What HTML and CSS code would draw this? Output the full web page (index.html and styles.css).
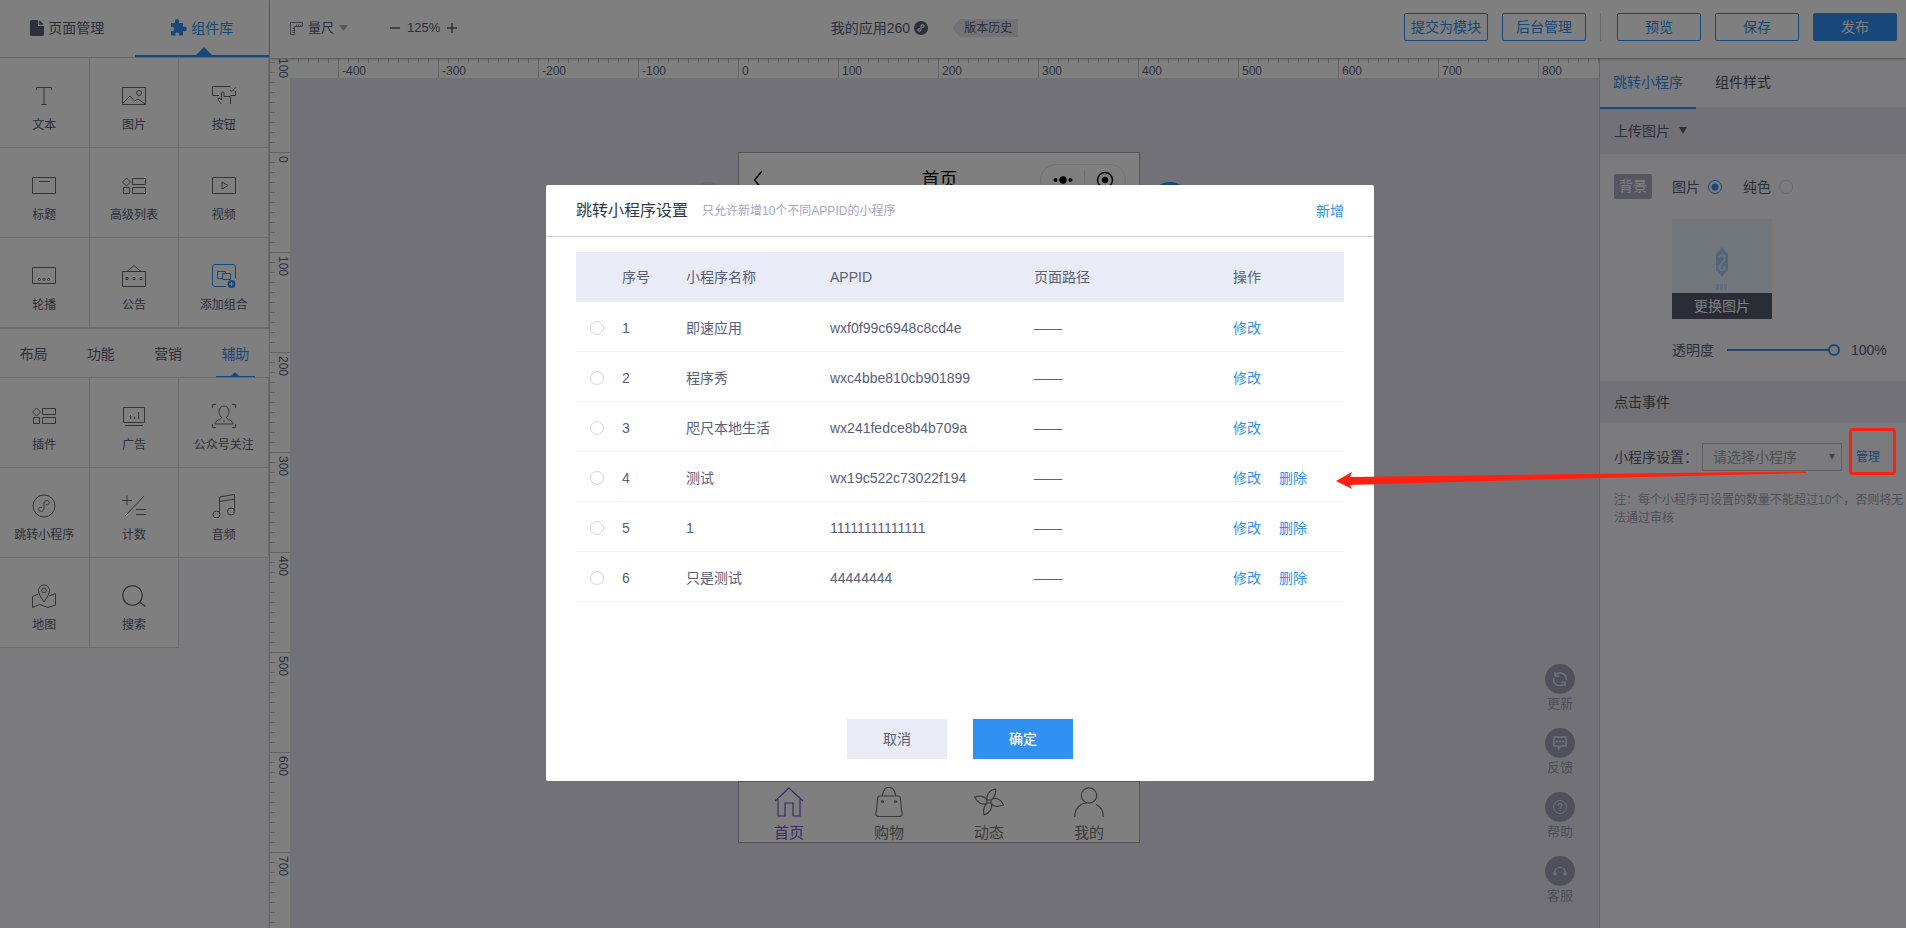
FILE: index.html
```html
<!DOCTYPE html>
<html lang="zh-CN">
<head>
<meta charset="utf-8">
<title>我的应用260</title>
<link rel="stylesheet" href="styles.css">
</head>
<body>
<div class="app">
  <aside class="sidebar">
    <nav class="main-tabs">
      <button class="main-tab" type="button">
        <svg width="14" height="16" viewBox="0 0 14 16"><path fill="currentColor" d="M1.500 0H8v6h6v8.500a1.500 1.500 0 0 1-1.500 1.500h-11A1.500 1.500 0 0 1 0 14.500v-13A1.500 1.500 0 0 1 1.500 0zM9.200 0 14 4.800H9.200z"/></svg>
        页面管理</button>
      <button class="main-tab active" type="button">
        <svg width="17" height="17" viewBox="0 0 17 17"><path fill="currentColor" d="M1 4h4.200C4.300 2 4.900.300 7 .300S9.700 2 8.800 4H13v4c1.800-.9 3.700-.2 3.700 1.900S14.800 12.900 13 12v4.500H8.800c.7-1.900.1-3-1.600-3s-2.300 1.100-1.600 3H1v-4.700c2 .6 3.200-.1 3.200-1.800S3 7.600 1 8.300z"/></svg>
        组件库</button>
    </nav>
    <div class="tiles">
      <button class="tile" type="button"><svg class="ico" viewBox="0 0 24 24"><path d="M4.500 6V3.500h15V6M12 3.500v17M9.500 20.500h5"/></svg>文本</button>
      <button class="tile" type="button"><svg class="ico" viewBox="0 0 24 24"><path d="M.500 3.500h23v17H.500zM1 19l7-7 4.500 5 3.500-2 7 5"/><circle cx="17" cy="9" r="2.500"/></svg>图片</button>
      <button class="tile" type="button"><svg class="ico" viewBox="0 0 24 24"><path d="M7 11.500H.500v-9h18M23.500 7v4.500h-5M18 6l2 1.500L23.500 3.500M9 20c0-1.500-3-3-3-5.500 1.500-.7 2.500 0 3.500 1.500V9c0-1.500 2.500-1.500 2.500 0v3.500h6.500v7.500"/></svg>按钮</button>
      <button class="tile" type="button"><svg class="ico" viewBox="0 0 24 24"><path d="M.500 3.500h23v16H.500zM7 7.500h11"/></svg>标题</button>
      <button class="tile" type="button"><svg class="ico" viewBox="0 0 24 24"><path d="m4.500 4 4 4-4 4-4-4zM10.500 4.500h13v6h-13zM1.500 13.500h6v6h-6zM10.500 13.500h13v6h-13z"/></svg>高级列表</button>
      <button class="tile" type="button"><svg class="ico" viewBox="0 0 24 24"><path d="M.500 3.500h23v16H.500zM10 8l6 3.500-6 3.500z"/></svg>视频</button>
      <button class="tile" type="button"><svg class="ico" viewBox="0 0 24 24"><path d="M.500 3.500h23v16H.500z"/><circle cx="7.500" cy="15.500" r="1"/><circle cx="12" cy="15.500" r="1"/><circle cx="16.500" cy="15.500" r="1"/></svg>轮播</button>
      <button class="tile" type="button"><svg class="ico" viewBox="0 0 24 24"><path d="M.500 7.500h23v15H.500zM5 7.500l7-6 7 6"/><path d="M4 13.500h2v2H4zM11 13.500h2v2h-2zM18 13.500h2v2h-2z"/></svg>公告</button>
      <button class="tile" type="button"><svg class="ico blue" viewBox="0 0 24 24"><path d="M14 22.500H3a2.500 2.500 0 0 1-2.500-2.500V3A2.500 2.500 0 0 1 3 .500h18A2.500 2.500 0 0 1 23.500 3v11.500M10 14.500H5.500v-7h8v2M10.500 9.500h8v6h-8z"/><circle cx="19.500" cy="20" r="4" fill="currentColor" stroke="none"/><path stroke="#fff" d="M17.500 20h4M19.500 18v4"/></svg>添加组合</button>
    </div>
    <nav class="sub-tabs">
      <button type="button">布局</button>
      <button type="button">功能</button>
      <button type="button">营销</button>
      <button type="button" class="active">辅助</button>
    </nav>
    <div class="tiles">
      <button class="tile" type="button"><svg class="ico" viewBox="0 0 24 24"><path d="m4.500 4 4 4-4 4-4-4zM10.500 4.500h13v6h-13zM1.500 13.500h6v6h-6zM10.500 13.500h13v6h-13z"/></svg>插件</button>
      <button class="tile" type="button"><svg class="ico" viewBox="0 0 24 24"><path d="M1.500 3.500h21v15h-21zM3 21.500h18M8.500 11v4M12.500 12.500V15M16.500 8v7"/></svg>广告</button>
      <button class="tile" type="button"><svg class="ico" viewBox="0 0 24 24"><path d="M.500 4V.500H4M20 .500h3.500V4M.500 20v3.500H4M20 23.500h3.500V20M9.500 13.500C7 11 6.500 8 7.500 5c1.500-4 7.500-4 9 0 1 3 .5 6-2 8.500.2 2.500 6.500 2 6.500 6.500H3c0-4.500 6.300-4 6.500-6.500z"/><circle cx="12" cy="17" r=".5"/></svg>公众号关注</button>
      <button class="tile" type="button"><svg class="ico" viewBox="0 0 24 24"><circle cx="12" cy="12" r="11"/><path d="M10 13.500c-2-.8-3.500.5-3.300 2.200.6 2.300 5 2.200 5.300-.7V9c.3-2.900 4.700-3 5.300-.7.2 1.700-1.300 3-3.300 2.200"/></svg>跳转小程序</button>
      <button class="tile" type="button"><svg class="ico" viewBox="0 0 24 24"><path d="M0 6.500h10M5 1.500v10M3 22 22 2M14 15.500h10M14 20.500h10"/></svg>计数</button>
      <button class="tile" type="button"><svg class="ico" viewBox="0 0 24 24"><circle cx="4.500" cy="20.500" r="3.500"/><circle cx="19" cy="17.500" r="3.500"/><path d="M7.500 20V3l15-2.500v17M7.500 7.500l15-2.500"/></svg>音频</button>
      <button class="tile" type="button"><svg class="ico" viewBox="0 0 24 24"><path d="M12 18C9 13.500 6.500 9.500 6.500 6.500a5.500 5.500 0 0 1 11 0C17.500 9.500 15 13.500 12 18zM6.500 10l-6 2.500v11L8 20.500l8 3 7.500-2.500V9.500L17 12"/><circle cx="12" cy="6.500" r="2.300"/></svg>地图</button>
      <button class="tile" type="button"><svg class="ico thick" viewBox="0 0 24 24"><circle cx="10.500" cy="11.500" r="9.800"/><path d="m17.500 18 6 4.500"/></svg>搜索</button>
    </div>
  </aside>

  <div class="workspace">
    <header class="topbar">
      <div class="tools">
        <button class="ruler-btn" type="button">
          <svg width="13" height="13" viewBox="0 0 13 13"><path fill="none" stroke="currentColor" stroke-opacity=".75" d="M.500.500h12v4h-8v8h-4zM6.500 2.500v2M8.500 2.500v2M10.500 2.500v2M2.500 6.500h2M2.500 8.500h2M2.500 10.500h2"/></svg>
          量尺
          <svg class="pale" width="9" height="6" viewBox="0 0 9 6"><path fill="currentColor" d="M0 0h9L4.500 6z"/></svg>
        </button>
        <div class="zoomer">
          <button type="button" aria-label="缩小"><svg width="10" height="10" viewBox="0 0 10 10"><path stroke="currentColor" stroke-width="1.500" d="M0 5h10"/></svg></button>
          <span>125%</span>
          <button type="button" aria-label="放大"><svg width="10" height="10" viewBox="0 0 10 10"><path stroke="currentColor" stroke-width="1.500" d="M0 5h10M5 0v10"/></svg></button>
        </div>
      </div>
      <div class="app-title">
        <span>我的应用260</span>
        <svg width="14" height="14" viewBox="0 0 24 24"><circle cx="12" cy="12" r="12" fill="currentColor"/><path fill="none" stroke="#fff" stroke-width="2" d="M10 13.500c-2-.8-3.500.5-3.300 2.200.6 2.300 5 2.200 5.300-.7V9c.3-2.900 4.700-3 5.300-.7.2 1.700-1.300 3-3.300 2.200"/></svg>
        <button class="history" type="button">版本历史</button>
      </div>
      <div class="actions">
        <button class="btn" type="button">提交为模块</button>
        <button class="btn" type="button">后台管理</button>
        <span class="rule"></span>
        <button class="btn" type="button">预览</button>
        <button class="btn" type="button">保存</button>
        <button class="btn solid" type="button">发布</button>
      </div>
    </header>

    <div class="editor">
      <div class="ruler-v"><span>100</span><span>0</span><span>100</span><span>200</span><span>300</span><span>400</span><span>500</span><span>600</span><span>700</span></div>
      <div class="ruler-h"><span>-400</span><span>-300</span><span>-200</span><span>-100</span><span>0</span><span>100</span><span>200</span><span>300</span><span>400</span><span>500</span><span>600</span><span>700</span><span>800</span></div>
      <main class="stage">
        <span class="knob left"></span>
        <span class="knob right"></span>
        <section class="phone">
          <div class="phone-bar">
            <svg width="10" height="20" viewBox="0 0 10 20"><path fill="none" stroke="#000" stroke-width="1.500" d="M9 1 1.500 10 9 19"/></svg>
            <h1>首页</h1>
            <div class="capsule">
              <svg width="20" height="8" viewBox="0 0 20 8"><circle cx="2.500" cy="4" r="2"/><circle cx="10" cy="4" r="3.700"/><circle cx="17.500" cy="4" r="2"/></svg>
              <svg width="18" height="18" viewBox="0 0 18 18"><circle cx="9" cy="9" r="7.500" fill="none" stroke="#000" stroke-width="1.500"/><circle cx="9" cy="9" r="3.200"/></svg>
            </div>
          </div>
          <nav class="phone-tabs">
            <a class="active" href="#"><svg viewBox="0 0 30 30"><path d="M1 14 15 1l14 13M4 12v17h7V16h8v13h7V12"/></svg>首页</a>
            <a href="#"><svg viewBox="0 0 30 30"><path d="M5.500 9h19c1 0 1.500.5 1.700 1.500L28 27c0 1.500-1 2.500-2.500 2.500h-21C3 29.500 2 28.500 2 27l1.800-16.500C4 9.500 4.500 9 5.500 9zM8.500 8.500c.5-11 12.500-11 13 0"/><circle cx="8.500" cy="14.500" r="1"/><circle cx="21.500" cy="14.500" r="1"/></svg>购物</a>
            <a href="#"><svg viewBox="0 0 30 30"><path d="M13 13C12 7 16 3 21.500 2c.5 4-.5 8-4.500 11M17 13c4-3 9-2 12.500 5-5 2-10 2-12.500-2M17 16c2 5-1 10-7 12-1-5 0-9 3-12M13 16c-5 3-10-1-12.500-6 5-1.500 10-1 12.500 3M13 13h4v3h-4z"/></svg>动态</a>
            <a href="#"><svg viewBox="0 0 30 30"><circle cx="15" cy="8.500" r="7.700"/><path d="M.700 30C.700 22 6 16 13 16M22 17.500c4.500 2 7.300 6.500 7.300 12.500"/></svg>我的</a>
          </nav>
        </section>
        <div class="helpers">
          <button type="button"><i><svg viewBox="0 0 14 14"><path fill="none" stroke="currentColor" stroke-width="1.500" d="M3 2.500A6 6 0 0 1 13 8M11 12A6 6 0 0 1 1 6M2 0v4h4M12 14v-4H8"/></svg></i>更新</button>
          <button type="button"><i><svg viewBox="0 0 14 14"><path fill="none" stroke="currentColor" stroke-width="1.500" d="M1 1h12v9H8l-2.500 3V10H1zM3 5.500h2M6 5.500h2M9 5.500h2"/></svg></i>反馈</button>
          <button type="button"><i><svg viewBox="0 0 14 14"><path fill="none" stroke="currentColor" stroke-width="1.200" d="M5 5.500C5 2.500 9.300 3 9 5.500 8.800 7 7 7 7 9M7 10v1.300"/><circle cx="7" cy="7" r="6.400" fill="none" stroke="currentColor"/></svg></i>帮助</button>
          <button type="button"><i><svg viewBox="0 0 14 14"><path fill="none" stroke="currentColor" stroke-width="1.200" d="M1.500 9.500c0-8 11-8 11 0"/><circle cx="2" cy="10" r="1.800" fill="currentColor"/><circle cx="12" cy="10" r="1.800" fill="currentColor"/></svg></i>客服</button>
        </div>
      </main>

      <aside class="props">
        <nav class="prop-tabs">
          <button class="active" type="button">跳转小程序</button>
          <button type="button">组件样式</button>
        </nav>
        <h2 class="prop-head">上传图片 <svg width="8" height="7" viewBox="0 0 8 7"><path fill="currentColor" d="M0 0h8L4 7z"/></svg></h2>
        <div class="prop-body">
          <div class="bg-row">
            <span class="badge">背景</span>
            <label>图片 <input type="radio" name="bg" checked></label>
            <label>纯色 <input type="radio" name="bg"></label>
          </div>
          <div class="thumb">
            <svg width="12" height="44" viewBox="0 0 12 44"><path fill="#a5cdf4" d="m6 0 3 4 3 3v16l-3 3-3 4-3-4-3-3V7l3-3z"/><path fill="none" stroke="#dcedf8" stroke-width="1.500" d="M3.500 10 6 7.500 8.500 9v4l-5 6v3L6 23.500 8.500 22v-3"/><path stroke="#c3dcee" stroke-width="6" stroke-dasharray="3 1" d="M0 40h12"/></svg>
            <button type="button">更换图片</button>
          </div>
          <label class="opacity">透明度 <input type="range" min="0" max="100" value="100"><output>100%</output></label>
        </div>
        <h2 class="prop-head small">点击事件</h2>
        <div class="event-row">
          <label for="mini">小程序设置：</label>
          <span class="select"><select id="mini"><option>请选择小程序</option></select><svg width="6" height="6" viewBox="0 0 6 6"><path fill="currentColor" d="M0 0h6L3 6z"/></svg></span>
          <a href="#">管理</a>
        </div>
        <p class="note">注：每个小程序可设置的数量不能超过10个，否则将无法通过审核</p>
      </aside>
    </div>
  </div>
</div>

<div class="mask">
  <form class="dialog" role="dialog" aria-labelledby="dlg-title">
    <header class="dlg-head">
      <h2 id="dlg-title">跳转小程序设置</h2>
      <small>只允许新增10个不同APPID的小程序</small>
      <a href="#">新增</a>
    </header>
    <table class="list">
      <colgroup><col class="c-pick"><col class="c-no"><col class="c-name"><col class="c-id"><col class="c-path"><col></colgroup>
      <thead><tr><th></th><th>序号</th><th>小程序名称</th><th>APPID</th><th>页面路径</th><th>操作</th></tr></thead>
      <tbody>
        <tr><td><input type="radio" name="mini" aria-label="即速应用"></td><td>1</td><td>即速应用</td><td>wxf0f99c6948c8cd4e</td><td>——</td><td><a href="#">修改</a></td></tr>
        <tr><td><input type="radio" name="mini" aria-label="程序秀"></td><td>2</td><td>程序秀</td><td>wxc4bbe810cb901899</td><td>——</td><td><a href="#">修改</a></td></tr>
        <tr><td><input type="radio" name="mini" aria-label="咫尺本地生活"></td><td>3</td><td>咫尺本地生活</td><td>wx241fedce8b4b709a</td><td>——</td><td><a href="#">修改</a></td></tr>
        <tr><td><input type="radio" name="mini" aria-label="测试"></td><td>4</td><td>测试</td><td>wx19c522c73022f194</td><td>——</td><td><a href="#">修改</a><a href="#">删除</a></td></tr>
        <tr><td><input type="radio" name="mini" aria-label="1"></td><td>5</td><td>1</td><td>11111111111111</td><td>——</td><td><a href="#">修改</a><a href="#">删除</a></td></tr>
        <tr><td><input type="radio" name="mini" aria-label="只是测试"></td><td>6</td><td>只是测试</td><td>44444444</td><td>——</td><td><a href="#">修改</a><a href="#">删除</a></td></tr>
      </tbody>
    </table>
    <footer class="dlg-foot">
      <button type="button">取消</button>
      <button type="button" class="ok">确定</button>
    </footer>
  </form>
</div>

<span class="mark-box"></span>
<svg class="mark-arrow" width="470" height="19" viewBox="0 0 470 19"><path fill="#ff2010" d="M0 10 16 1l-2 5 231-3L470 .500v1.500l-225 5.500L14 14l2 4z"/></svg>
</body>
</html>
```

FILE: styles.css
```css
:root {
  --blue: #3091f2;
  --ink: #59607a;
  --line: #d5d5da;
  --canvas: #e4e3ee;
  --panel: #f7f7fa;
}

* { box-sizing: border-box; }

body {
  margin: 0;
  color: var(--ink);
  font: 14px/20px "Liberation Sans", "Noto Sans CJK SC", sans-serif;
}

h1, h2, p { margin: 0; font-weight: 400; }

a { color: var(--blue); text-decoration: none; }

button {
  padding: 0;
  border: 0;
  background: none;
  color: inherit;
  font: inherit;
}

input[type="radio"] {
  appearance: none;
  width: 14px;
  height: 14px;
  margin: 0;
  border: 1px solid #d5d5d9;
  border-radius: 50%;
}

.props input[type="radio"]:checked {
  border-color: var(--blue);
  background: radial-gradient(circle, var(--blue) 3px, transparent 4px);
}

.app { display: flex; height: 100vh; overflow: hidden; }

/* component library */
.sidebar {
  flex: none;
  width: 270px;
  border-right: 1px solid #c4c4c8;
  background: var(--panel);
}

.main-tabs {
  display: grid;
  grid-template-columns: 1fr 1fr;
  height: 58px;
  border-bottom: 1px solid #c8c8cc;
  background: #fff;
}

.main-tab {
  position: relative;
  display: flex;
  align-items: center;
  justify-content: center;
  gap: 4px;
  padding-bottom: 2px;
}

.main-tab.active {
  padding-bottom: 0;
  border-bottom: 2px solid var(--blue);
  color: var(--blue);
}

.main-tab.active::after {
  content: "";
  position: absolute;
  bottom: 0;
  left: 50%;
  margin-left: -6px;
  border: 8px solid transparent;
  border-top-width: 0;
  border-bottom-color: var(--blue);
}

.tiles { display: grid; grid-template-columns: repeat(3, 1fr); }

.tile {
  display: flex;
  flex-direction: column;
  align-items: center;
  gap: 8px;
  height: 90px;
  padding-top: 26px;
  border: solid var(--line);
  border-width: 0 1px 1px 0;
  background: #fff;
  font-size: 12px;
  line-height: 18px;
}

.ico {
  width: 24px;
  height: 24px;
  fill: none;
  stroke: currentColor;
  color: #6a6a6a;
}

.ico.blue { color: var(--blue); }
.ico.thick { stroke-width: 1.3; }

.sub-tabs {
  display: grid;
  grid-template-columns: repeat(4, 1fr);
  height: 50px;
  border: solid var(--line);
  border-width: 1px 0;
  background: #fff;
}

.sub-tabs button { position: relative; padding-top: 2px; }
.sub-tabs .active { color: var(--blue); }

.sub-tabs .active::before {
  content: "";
  position: absolute;
  bottom: 0;
  left: 14px;
  right: 14px;
  height: 1px;
  background: var(--blue);
}

.sub-tabs .active::after {
  content: "";
  position: absolute;
  bottom: 1px;
  left: 50%;
  margin-left: -4px;
  border: 4px solid transparent;
  border-top-width: 0;
  border-bottom-color: var(--blue);
}

/* top bar */
.workspace { flex: 1; display: flex; flex-direction: column; min-width: 0; }

.topbar {
  z-index: 1;
  display: grid;
  grid-template-columns: 8fr auto 13fr;
  align-items: center;
  flex: none;
  height: 58px;
  padding: 0 9px 2px 20px;
  background: #fff;
  box-shadow: 0 1px 2px rgba(0, 0, 0, .35);
}

.tools, .ruler-btn, .zoomer, .app-title, .actions { display: flex; align-items: center; }
.tools { gap: 42px; font-size: 13px; }
.ruler-btn { gap: 5px; }
.pale { color: #b4b4b8; }
.zoomer { gap: 7px; }
.zoomer button { display: flex; }
.app-title { gap: 4px; }

.history {
  height: 18px;
  margin-left: 20px;
  padding: 0 6px 0 12px;
  background: #e5e6ef;
  clip-path: polygon(0 50%, 8px 0, 100% 0, 100% 100%, 8px 100%);
  font-size: 12px;
  line-height: 18px;
}

.actions { justify-content: flex-end; gap: 14px; padding-bottom: 2px; }
.rule { width: 1px; height: 28px; margin-right: 2px; background: var(--line); }

.btn {
  width: 84px;
  height: 28px;
  border: 1px solid var(--blue);
  border-radius: 2px;
  color: var(--blue);
}

.btn.solid { background: var(--blue); color: #fff; }

/* canvas and rulers */
.editor {
  flex: 1;
  display: grid;
  grid-template: 20px 1fr / 20px 1fr 307px;
  min-height: 0;
}

.ruler-v, .ruler-h { display: flex; overflow: hidden; font-size: 12px; }
.ruler-v span, .ruler-h span { flex: none; }

.ruler-v {
  grid-row: 1 / 3;
  flex-direction: column;
  background:
    linear-gradient(#c8c8cc 1px, transparent 1px) 0 94px / 20px 100px repeat-y,
    linear-gradient(#c8c8cc 1px, transparent 1px) 0 4px / 5px 10px repeat-y,
    #fff;
}

.ruler-v span {
  align-self: flex-end;
  height: 100px;
  padding-top: 4px;
  line-height: 14px;
  writing-mode: vertical-rl;
}

.ruler-v span:first-child { height: 94px; padding-top: 0; }

.ruler-h {
  padding: 6px 0 0 48px;
  background:
    linear-gradient(90deg, #c8c8cc 1px, transparent 1px) 48px 0 / 100px 20px repeat-x,
    linear-gradient(90deg, #c8c8cc 1px, transparent 1px) 8px 0 / 10px 5px repeat-x,
    #fff;
  line-height: 14px;
}

.ruler-h span { width: 100px; padding-left: 4px; }

.stage { position: relative; grid-column: 2; overflow: hidden; background: var(--canvas); }

.knob {
  position: absolute;
  top: 104px;
  width: 36px;
  height: 36px;
  border-radius: 50%;
}

.knob.left { left: 400px; background: #d2d2de; }
.knob.right { left: 862px; background: var(--blue); }

.phone {
  position: absolute;
  top: 74px;
  left: 448px;
  display: flex;
  flex-direction: column;
  justify-content: space-between;
  width: 402px;
  height: 691px;
  border: 1px solid #aaa;
  background: #fff;
}

.phone-bar {
  display: grid;
  grid-template-columns: 1fr auto 1fr;
  align-items: center;
  padding: 11px 13px 0 14px;
  color: #000;
}

.phone-bar h1 { font-size: 18px; line-height: 24px; }

.capsule {
  justify-self: end;
  display: flex;
  align-items: center;
  justify-content: space-around;
  width: 86px;
  height: 32px;
  border: 1px solid #e4e4e4;
  border-radius: 16px;
  background: linear-gradient(90deg, transparent 43px, #e4e4e4 43px, #e4e4e4 44px, transparent 44px) 0 6px / 100% 20px no-repeat;
}

.phone-tabs {
  display: grid;
  grid-template-columns: repeat(4, 1fr);
  height: 61px;
  border-top: 1px solid #aaa;
}

.phone-tabs a {
  display: flex;
  flex-direction: column;
  align-items: center;
  gap: 6px;
  padding-top: 5px;
  color: #777;
  font-size: 15px;
}

.phone-tabs svg { width: 30px; height: 30px; fill: none; stroke: currentColor; stroke-width: 1.2; }
.phone-tabs .active { color: #7b4be0; }

.helpers {
  position: absolute;
  right: 24px;
  bottom: 22px;
  display: grid;
  gap: 14px;
}

.helpers button {
  display: grid;
  justify-items: center;
  color: #9a9bb0;
  font-size: 13px;
}

.helpers i {
  display: grid;
  place-items: center;
  width: 30px;
  height: 30px;
  border-radius: 50%;
  background: #9fa1b8;
  color: #e4e3ee;
}

.helpers svg { width: 14px; height: 14px; }

/* properties */
.props {
  grid-area: 1 / 3 / 3 / 4;
  border-left: 1px solid #c8c8d0;
  background: var(--panel);
}

.prop-tabs { display: flex; gap: 6px; height: 49px; color: #555; }
.prop-tabs button { height: 51px; padding: 0 13px 2px; border-bottom: 2px solid transparent; }
.prop-tabs .active { border-color: var(--blue); color: var(--blue); }

.prop-head {
  display: flex;
  align-items: center;
  gap: 9px;
  height: 47px;
  padding-left: 14px;
  background: var(--canvas);
  font-size: 14px;
}

.prop-head.small { height: 42px; color: #555; }

.prop-tabs .active { position: relative; }

.prop-body { padding: 20px 14px 0; }

.bg-row { display: flex; align-items: center; gap: 21px; }
.bg-row label { display: flex; align-items: center; gap: 8px; }

.badge {
  width: 38px;
  margin-right: -1px;
  border-radius: 2px;
  background: #abacc2;
  color: #fff;
  line-height: 25px;
  text-align: center;
}

.thumb {
  display: flex;
  flex-direction: column;
  align-items: center;
  justify-content: space-between;
  width: 100px;
  height: 100px;
  margin: 20px 0 21px 58px;
  padding-top: 28px;
  background: #e2eef6;
}

.thumb button { width: 100%; height: 26px; background: #555a6c; color: #fff; }
.thumb svg { flex: none; }

.opacity {
  display: flex;
  align-items: center;
  gap: 13px;
  height: 41px;
  padding: 0 0 21px 58px;
  white-space: nowrap;
}

.opacity output { margin-left: -2px; }

.opacity input {
  appearance: none;
  flex: none;
  width: 113px;
  height: 12px;
  margin: 0;
  background: linear-gradient(var(--blue), var(--blue)) 0 5px / 102px 2px no-repeat;
}

.opacity input::-webkit-slider-thumb {
  appearance: none;
  width: 12px;
  height: 12px;
  border: 2px solid var(--blue);
  border-radius: 50%;
  background: var(--panel);
}

.event-row { display: flex; align-items: center; padding: 20px 0 0 14px; }
.event-row label { flex: none; width: 88px; }
.event-row a { margin-left: 14px; font-size: 12px; }

.select { position: relative; width: 140px; }
.select svg { position: absolute; top: 11px; right: 7px; color: #88898f; }

.select select {
  appearance: none;
  width: 100%;
  height: 28px;
  padding: 0 10px;
  border: 1px solid #c2c2c6;
  background: none;
  color: #a0a0a6;
  font: inherit;
}

.note { padding: 20px 0 0 14px; color: #9fa1b8; font-size: 12px; line-height: 18px; }

/* dialog */
.mask {
  position: fixed;
  inset: 0;
  z-index: 10;
  display: grid;
  place-items: center;
  padding: 38px 0 0 14px;
  background: rgba(0, 0, 0, .5);
}

.dialog {
  display: flex;
  flex-direction: column;
  width: 828px;
  min-height: 596px;
  border-radius: 2px;
  background: #fff;
}

.dlg-head {
  display: flex;
  align-items: center;
  gap: 14px;
  height: 52px;
  padding: 0 30px;
  border-bottom: 1px solid #d4d4dc;
}

.dlg-head h2 { color: #333848; font-size: 16px; }
.dlg-head small { color: #a3a6bf; font-size: 12px; }
.dlg-head a { margin-left: auto; }

.list {
  table-layout: fixed;
  margin: 15px 30px 0;
  border-collapse: separate;
  border-spacing: 0;
  text-align: left;
}

.c-pick { width: 46px; }
.c-no { width: 64px; }
.c-name { width: 144px; }
.c-id { width: 204px; }
.c-path { width: 199px; }

.list th, .list td { height: 50px; padding: 0; font-weight: 400; }
.list thead { background: #e9ecf6; }
.list td { padding-top: 2px; border-bottom: 1px solid #f2f2f4; }
.list input { display: block; margin-left: 14px; }
.list a { margin-right: 18px; }

.dlg-foot { display: flex; justify-content: center; gap: 26px; margin-top: auto; padding-bottom: 22px; }
.dlg-foot button { width: 100px; height: 40px; background: #e9ecf6; }
.dlg-foot .ok { background: var(--blue); color: #fff; font-weight: 500; }

/* annotation over the page */
.mark-box {
  position: fixed;
  top: 428px;
  right: 10px;
  z-index: 20;
  width: 47px;
  height: 47px;
  border: 3px solid #ff2010;
  border-radius: 4px;
  pointer-events: none;
}

.mark-arrow { position: fixed; top: 471px; right: 100px; z-index: 20; pointer-events: none; }
```
